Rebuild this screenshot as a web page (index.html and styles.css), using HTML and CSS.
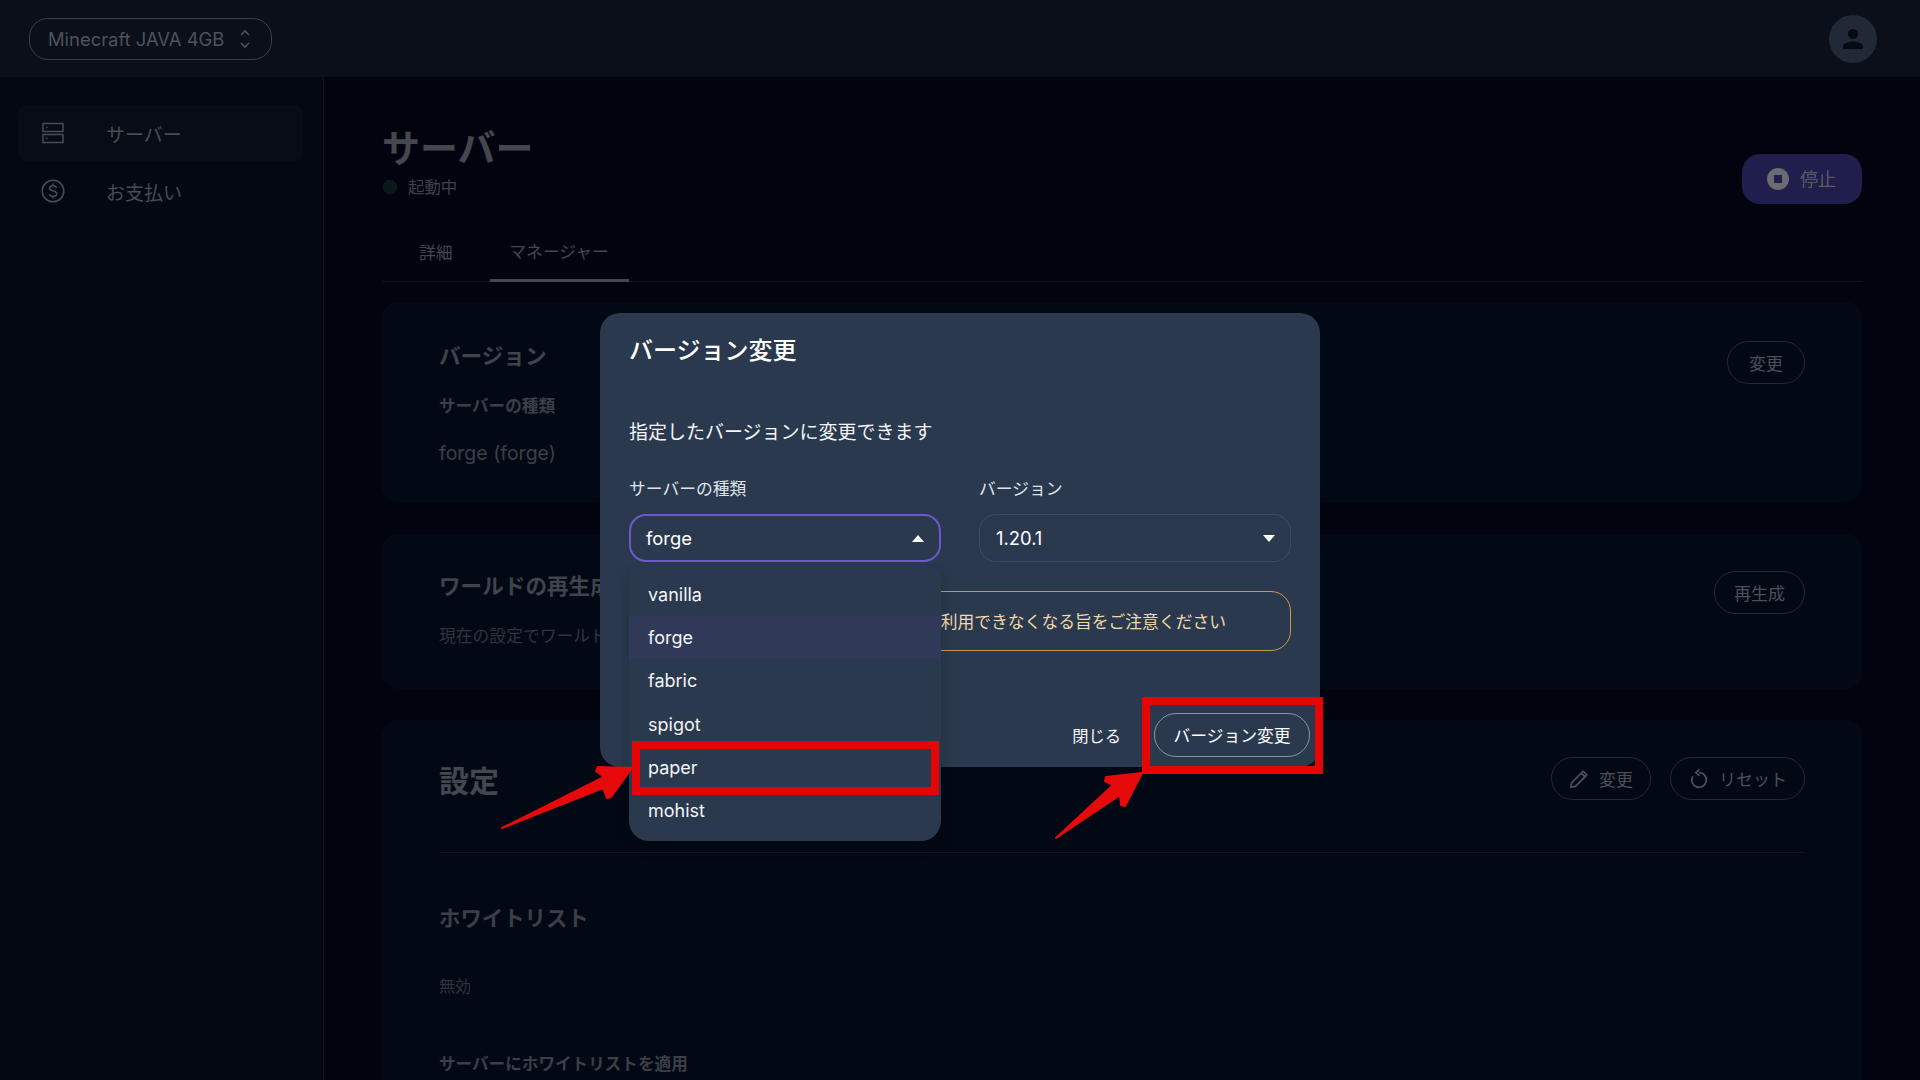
FILE: index.html
```html
<!DOCTYPE html>
<html lang="ja">
<head>
  <meta charset="UTF-8">
  <title>サーバー</title>
  <link rel="stylesheet" href="styles.css">
</head>
<body>

<header class="topbar">
  <div class="plan-select">
    <span>Minecraft JAVA 4GB</span>
    <svg class="updown" viewBox="0 0 12 24" width="12" height="24"><path d="M2 8l4-4 4 4M2 16l4 4 4-4"/></svg>
  </div>
  <div class="avatar">
    <svg viewBox="0 0 24 24" width="30" height="30"><path d="M12 12c2.21 0 4-1.79 4-4s-1.79-4-4-4-4 1.79-4 4 1.79 4 4 4zm0 2c-2.67 0-8 1.34-8 4v2h16v-2c0-2.66-5.33-4-8-4z"/></svg>
  </div>
</header>

<div class="layout">
  <aside class="sidebar">
    <div class="nav-item active">
      <svg class="nav-icon" viewBox="0 0 24 24" width="24" height="24">
        <rect x="2" y="2.500" width="20" height="8"/>
        <rect x="2" y="13.500" width="20" height="8"/>
        <path d="M5 6.500h1.500M5 17.500h1.500"/>
      </svg>
      <span>サーバー</span>
    </div>
    <div class="nav-item">
      <svg class="nav-icon" viewBox="0 0 24 24" width="24" height="24">
        <circle cx="12" cy="12" r="10.800"/>
        <path d="M15.500 9c-.3-1.500-1.700-2.300-3.500-2.300-2 0-3.500 1-3.500 2.600 0 3.700 7.200 1.700 7.200 5.400 0 1.600-1.600 2.600-3.700 2.600-1.900 0-3.400-.9-3.700-2.500M12 4.500v2.200M12 17.300v2.200"/>
      </svg>
      <span>お支払い</span>
    </div>
  </aside>

  <main class="content">
    <div class="page-head">
      <div class="page-title">
        <h1>サーバー</h1>
        <div class="status"><i class="dot"></i>起動中</div>
      </div>
      <div class="stop-btn">
        <svg viewBox="0 0 24 24" width="24" height="24"><path fill-rule="evenodd" d="M12 1a11 11 0 1 0 0 22 11 11 0 0 0 0-22zM8 8h8v8H8z"/></svg>
        <span>停止</span>
      </div>
    </div>

    <nav class="tabs">
      <div class="tab">詳細</div>
      <div class="tab current">マネージャー</div>
    </nav>

    <section class="card card-version">
      <div>
        <h2>バージョン</h2>
        <h4>サーバーの種類</h4>
        <p class="value">forge (forge)</p>
      </div>
      <div class="btn">変更</div>
    </section>

    <section class="card card-world">
      <div>
        <h2>ワールドの再生成</h2>
        <p class="note">現在の設定でワールドを</p>
      </div>
      <div class="btn">再生成</div>
    </section>

    <section class="card card-settings">
      <div class="settings-head">
        <h2 class="big">設定</h2>
        <div class="btn-row">
          <div class="btn btn-icon">
            <svg viewBox="0 0 24 24" width="22" height="22"><path d="M3 21l1-5L16.500 3.500l4 4L8 20z M14.500 5.500l4 4"/></svg>
            <span>変更</span>
          </div>
          <div class="btn btn-icon">
            <svg viewBox="0 0 24 24" width="22" height="22"><path d="M12 5a8 8 0 1 1-6.900 4M12.500 1.500L8.500 5l4 3.500"/></svg>
            <span>リセット</span>
          </div>
        </div>
      </div>
      <h3>ホワイトリスト</h3>
      <p class="note off">無効</p>
      <h4 class="apply">サーバーにホワイトリストを適用</h4>
    </section>
  </main>
</div>

<div class="overlay">
  <div class="modal">
    <h2 class="modal-title">バージョン変更</h2>
    <p class="modal-desc">指定したバージョンに変更できます</p>
    <div class="fields">
      <div class="field">
        <label>サーバーの種類</label>
        <div class="select open">
          <span>forge</span>
          <i class="caret up"></i>
        </div>
        <ul class="menu">
          <li>vanilla</li>
          <li class="selected">forge</li>
          <li>fabric</li>
          <li>spigot</li>
          <li>paper</li>
          <li>mohist</li>
        </ul>
      </div>
      <div class="field">
        <label>バージョン</label>
        <div class="select">
          <span>1.20.1</span>
          <i class="caret"></i>
        </div>
      </div>
    </div>
    <div class="alert">利用できなくなる旨をご注意ください</div>
    <div class="modal-actions">
      <span class="close-link">閉じる</span>
      <span class="primary-btn">バージョン変更</span>
    </div>
  </div>
</div>

<svg class="marks" viewBox="0 0 1920 1080" width="1920" height="1080">
  <rect x="636" y="745" width="299" height="46"/>
  <rect x="1146" y="701" width="173" height="69"/>
  <path class="arrow" d="M502 828L604 777 596 771 598 767 632 768 611 797 607 798 603 788z"/>
  <path class="arrow" d="M1056 838L1113 785 1105 781 1106 777 1142 773 1125 806 1121 805 1120 795z"/>
</svg>

</body>
</html>
```

FILE: styles.css
```css
* { box-sizing: border-box; }
html, body { height: 100%; }
body {
  margin: 0; height: 1080px; overflow: hidden; position: relative;
  background: #01040e; color: #454952;
  font-family: Inter, "Noto Sans CJK JP", sans-serif; font-size: 16.8px;
}
h1, h2, h3, h4, p, ul { margin: 0; padding: 0; }

/* top bar */
.topbar {
  height: 77px; background: #0a0f1a; padding: 0 43px 0 29px;
  display: flex; align-items: center; justify-content: space-between;
}
.plan-select {
  width: 243px; height: 42px; border: 1px solid #3a404b; border-radius: 19px;
  padding: 0 20px 0 18px; display: flex; align-items: center; justify-content: space-between;
  font-size: 18.4px; color: #4d525b;
}
.updown { fill: none; stroke: #4d525b; stroke-width: 1.6; }
.avatar {
  width: 48px; height: 48px; border-radius: 50%; background: #222936;
  display: flex; align-items: center; justify-content: center;
}
.avatar svg { fill: #060a12; }

.layout { display: flex; height: 1003px; overflow: hidden; }

/* side nav */
.sidebar {
  width: 324px; flex: none; background: #030812; border-right: 1px solid #0e131d;
  padding: 28px 20px 0 18px; display: flex; flex-direction: column; gap: 2px;
}
.nav-item {
  height: 56px; padding-left: 23px; border-radius: 8px;
  display: flex; align-items: center; gap: 41px; font-size: 19px; color: #484c54;
}
.nav-item.active { background: #070c16; }
.nav-icon { fill: none; stroke: #484c54; stroke-width: 1.5; flex: none; }

/* main column */
.content { flex: 1; padding: 46px 58px 0 58px; min-width: 0; }
.page-head { display: flex; justify-content: space-between; align-items: flex-start; height: 81px; }
h1 { font-size: 38px; line-height: 46px; font-weight: 700; margin-top: 2px; color: #44474e; }
.status { display: flex; align-items: center; gap: 11px; line-height: 24px; margin-top: 4px; padding-left: 1px; font-size: 16.4px; color: #3d4149; }
.dot { width: 14px; height: 14px; border-radius: 50%; background: #0a1719; border: 1px solid #131f22; }
.stop-btn {
  width: 120px; height: 50px; margin-top: 31px; border-radius: 18px; background: #1f1e4d; color: #5a5a66;
  display: flex; align-items: center; justify-content: center; gap: 10px; font-size: 18px;
}
.stop-btn svg { fill: #6b6b72; }
.stop-btn span { margin: -2px 2px 0 0; }

.tabs { display: flex; height: 62px; margin-top: 16px; padding-left: 22px; border-bottom: 1px solid #0f141e; }
.tab { display: flex; align-items: center; height: 62px; color: #43474f; }
.tab:first-child { padding: 2px 15px 0; margin-right: 22px; }
.tab.current { width: 139px; justify-content: center; padding-top: 2px; border-bottom: 3px solid #43474f; }

.card {
  margin: 32px 0 0; padding: 37px 57px 0; background: #030914; border-radius: 16px;
  display: flex; justify-content: space-between; align-items: flex-start;
}
h2 { font-size: 21.6px; line-height: 30px; font-weight: 700; color: #3f434b; }
h2.big { font-size: 30px; line-height: 43px; color: #44474e; padding-top: 3px; margin-bottom: -3px; }
h3 { font-size: 21.400px; line-height: 30px; font-weight: 700; margin-top: 50px; color: #3b3f47; }
h4 { font-size: 16.6px; line-height: 24px; font-weight: 700; color: #3b3f47; }
.card-version { margin-top: 20px; height: 200px; padding-top: 39px; }
.card-version h4 { margin-top: 23px; }
.value { font-size: 19.500px; line-height: 30px; margin-top: 20px; color: #3b3f47; }
.card-world { height: 155px; }
.note { line-height: 24px; margin-top: 23px; color: #30343c; }
.off { margin-top: 41px; font-size: 16px; }
.apply { margin-top: 54px; }
.card-settings { display: block; height: 360px; margin-top: 31px; border-radius: 16px 16px 0 0; }
.settings-head {
  display: flex; justify-content: space-between; align-items: center;
  padding-bottom: 52px; border-bottom: 1px solid #10151f;
}
.btn-row { display: flex; gap: 19px; }
.btn {
  height: 43px; padding: 0 21px; border: 1px solid #232a36; border-radius: 22px; color: #4c5059;
  display: flex; align-items: center; justify-content: center; flex: none; font-size: 17px;
}
.card-world .btn { padding: 0 19px; }
.btn-icon { gap: 9px; padding: 0 17px; }
.btn-icon:first-child { padding: 0 17px 0 16px; }
.btn-icon svg { fill: none; stroke: #4c5059; stroke-width: 1.9; }

/* dialog */
.overlay { position: absolute; inset: 0; display: flex; align-items: center; justify-content: center; }
.modal {
  width: 720px; height: 454px; padding: 21px 29px 0; background: #2a394e; border-radius: 20px;
  color: #fff; display: flex; flex-direction: column;
}
.modal-title { font-size: 24px; line-height: 34px; font-weight: 500; color: #fff; }
.modal-desc { font-size: 19px; line-height: 26px; margin-top: 52px; color: #f3f5f7; }
.fields { display: grid; grid-template-columns: 312px 312px; gap: 38px; margin-top: 31px; }
.field { position: relative; }
.field label { display: block; font-size: 16.8px; line-height: 24px; color: #dfe3e8; }
.select {
  height: 48px; margin-top: 13px; padding: 0 15px 0 16px; border: 1px solid #3d4b61; border-radius: 17px;
  display: flex; align-items: center; justify-content: space-between; font-size: 18.4px;
}
.select.open { border: 2px solid #6a5acd; padding: 0 15px; }
.caret { border: 6px solid transparent; border-top: 7px solid #fff; border-bottom: 0; }
.caret.up { border-top: 0; border-bottom: 7px solid #fff; }
.menu {
  position: absolute; left: 0; right: 0; top: 92px; z-index: 2; list-style: none;
  height: 272px; padding: 4px 0; background: #2a394e; border-radius: 4px 4px 20px 20px;
  box-shadow: 0 6px 14px rgba(0, 0, 0, 0.18);
}
.menu li { height: 43.2px; padding-left: 19px; display: flex; align-items: center; font-size: 18px; color: #f3f5f7; }
.menu li.selected { background: #303a58; }
.alert {
  height: 60px; margin-top: 29px; padding-right: 64px; border: 1px solid #c49a4f; border-radius: 20px;
  display: flex; align-items: center; justify-content: flex-end; color: #f0d9a8; white-space: nowrap;
}
.modal-actions { display: flex; align-items: center; justify-content: flex-end; gap: 33px; margin-top: 62px; margin-right: -19px; }
.close-link { font-size: 16.3px; color: #f3f5f7; }
.primary-btn {
  width: 156px; height: 44px; border: 1px solid #8a94a5; border-radius: 22px;
  display: flex; align-items: center; justify-content: center;
}

/* red annotations from the screenshot */
.marks { position: absolute; left: 0; top: 0; z-index: 3; pointer-events: none; }
.marks rect { fill: none; stroke: #e60505; stroke-width: 8; }
.marks .arrow { fill: #e60a0a; stroke: #e60a0a; stroke-width: 2; stroke-linejoin: round; }
```
